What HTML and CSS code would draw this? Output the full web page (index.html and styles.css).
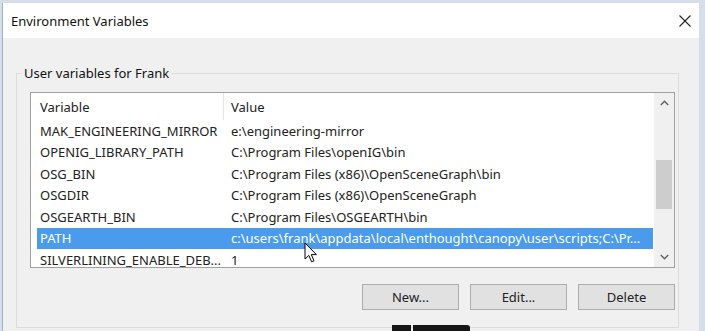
FILE: index.html
```html
<!DOCTYPE html>
<html lang="en">
<head>
    <meta charset="UTF-8">
    <meta name="viewport" content="width=device-width, initial-scale=1.0">
    <title>Environment Variables</title>
    <link rel="stylesheet" href="styles.css">
</head>
<body>
    <div class="window">
        <div class="title-bar">
            <span class="title">Environment Variables</span>
            <svg class="close" width="12" height="12" viewBox="0 0 12 12">
                <path d="M0.5 0.5 L11.5 11.5 M11.5 0.5 L0.5 11.5" stroke="#222" stroke-width="1.1" fill="none"/>
            </svg>
        </div>
        <div class="content">
            <fieldset class="group">
                <legend>User variables for Frank</legend>
                <div class="list-view">
                    <div class="list-body">
                        <div class="list-header">
                            <div class="col-var">Variable</div>
                            <div class="col-val">Value</div>
                        </div>
                        <div class="row">
                            <div class="col-var">MAK_ENGINEERING_MIRROR</div>
                            <div class="col-val">e:\engineering-mirror</div>
                        </div>
                        <div class="row">
                            <div class="col-var">OPENIG_LIBRARY_PATH</div>
                            <div class="col-val">C:\Program Files\openIG\bin</div>
                        </div>
                        <div class="row">
                            <div class="col-var">OSG_BIN</div>
                            <div class="col-val">C:\Program Files (x86)\OpenSceneGraph\bin</div>
                        </div>
                        <div class="row">
                            <div class="col-var">OSGDIR</div>
                            <div class="col-val">C:\Program Files (x86)\OpenSceneGraph</div>
                        </div>
                        <div class="row">
                            <div class="col-var">OSGEARTH_BIN</div>
                            <div class="col-val">C:\Program Files\OSGEARTH\bin</div>
                        </div>
                        <div class="row selected">
                            <div class="col-var">PATH</div>
                            <div class="col-val">c:\users\frank\appdata\local\enthought\canopy\user\scripts;C:\Pr...</div>
                        </div>
                        <div class="row">
                            <div class="col-var">SILVERLINING_ENABLE_DEB...</div>
                            <div class="col-val">1</div>
                        </div>
                    </div>
                    <div class="scrollbar">
                        <svg class="arrow" width="9" height="6" viewBox="0 0 9 6">
                            <path d="M0.8 5 L4.5 1.3 L8.2 5" stroke="#606060" stroke-width="1.4" fill="none"/>
                        </svg>
                        <div class="track">
                            <div class="thumb"></div>
                        </div>
                        <svg class="arrow" width="9" height="6" viewBox="0 0 9 6">
                            <path d="M0.8 1 L4.5 4.7 L8.2 1" stroke="#606060" stroke-width="1.4" fill="none"/>
                        </svg>
                    </div>
                    <svg class="cursor" width="14" height="22" viewBox="0 0 14 22">
                        <path d="M1 1 L1 17 L4.8 13.4 L7.6 19.8 L10 18.8 L7.3 12.6 L12.4 12.6 Z" fill="#fff" stroke="#000" stroke-width="1"/>
                    </svg>
                </div>
                <div class="buttons">
                    <button>New...</button>
                    <button>Edit...</button>
                    <button>Delete</button>
                </div>
            </fieldset>
        </div>
    </div>
    <div class="taskbar-tip">
        <div class="tip-left"></div>
        <div class="tip-right"></div>
    </div>
</body>
</html>
```

FILE: styles.css
```css
* {
    margin: 0;
    padding: 0;
    box-sizing: border-box;
}

body {
    font-family: 'Noto Sans', 'Open Sans', sans-serif;
    font-size: 13px;
    color: #000;
    background-color: #d6dfe9;
    width: 705px;
    height: 331px;
    overflow: hidden;
    padding: 3px 6px 0 2px;
}

.window {
    width: 697px;
    height: 340px;
    background: #f0f0f0;
    border-left: 1px solid #9fb3c8;
}

.title-bar {
    height: 35px;
    background: #fff;
    display: flex;
    align-items: center;
    justify-content: space-between;
    padding: 0 8px 0 8px;
}

.title {
    font-size: 13px;
    color: #111;
}

.content {
    padding: 26px 20px 0 13px;
}

.group {
    border: 1px solid #dcdcdc;
    height: 264px;
    padding: 10px 2px 0 13px;
}

.group legend {
    margin-left: -8px;
    padding: 0 2px;
    font-size: 13px;
    color: #111;
}

.list-view {
    position: relative;
    display: flex;
    width: 645px;
    height: 176px;
    border: 1px solid #a0a0a0;
    background: #fff;
}

.list-body {
    flex: 1;
    padding-left: 6px;
    overflow: hidden;
}

.list-header {
    display: flex;
    height: 27px;
    align-items: center;
    color: #222;
}

.list-header .col-var {
    border-right: 1px solid #e5e5e5;
    height: 100%;
    display: flex;
    align-items: center;
}

.row {
    display: flex;
    height: 21.5px;
    align-items: center;
    color: #222;
}

.col-var {
    width: 187px;
    padding-left: 3px;
    white-space: nowrap;
}

.col-val {
    padding-left: 7px;
    white-space: nowrap;
}

.row.selected {
    background: #4a9bed;
    color: #fff;
    margin-right: 1px;
}

.scrollbar {
    width: 20px;
    background: #f0f0f0;
    display: flex;
    flex-direction: column;
    align-items: center;
    padding: 5px 0 5px 0;
}

.track {
    flex: 1;
    width: 100%;
    padding: 52px 2px 0 2px;
}

.thumb {
    height: 49px;
    background: #cdcdcd;
}

.arrow {
    margin: 2px 0;
}

.cursor {
    position: absolute;
    left: 273px;
    top: 149px;
}

.buttons {
    display: flex;
    justify-content: flex-end;
    gap: 11px;
    width: 645px;
    margin-top: 16px;
}

button {
    width: 97px;
    height: 26px;
    background: #e1e1e1;
    border: 1px solid #adadad;
    font-family: 'Noto Sans', 'Open Sans', sans-serif;
    font-size: 13px;
    color: #222;
}

.taskbar-tip {
    position: absolute;
    left: 392px;
    top: 325px;
    display: flex;
    gap: 2px;
}

.tip-left {
    width: 19px;
    height: 6px;
    background: #161616;
}

.tip-right {
    width: 57px;
    height: 6px;
    background: #161616;
    border-radius: 0 3px 0 0;
}
```
